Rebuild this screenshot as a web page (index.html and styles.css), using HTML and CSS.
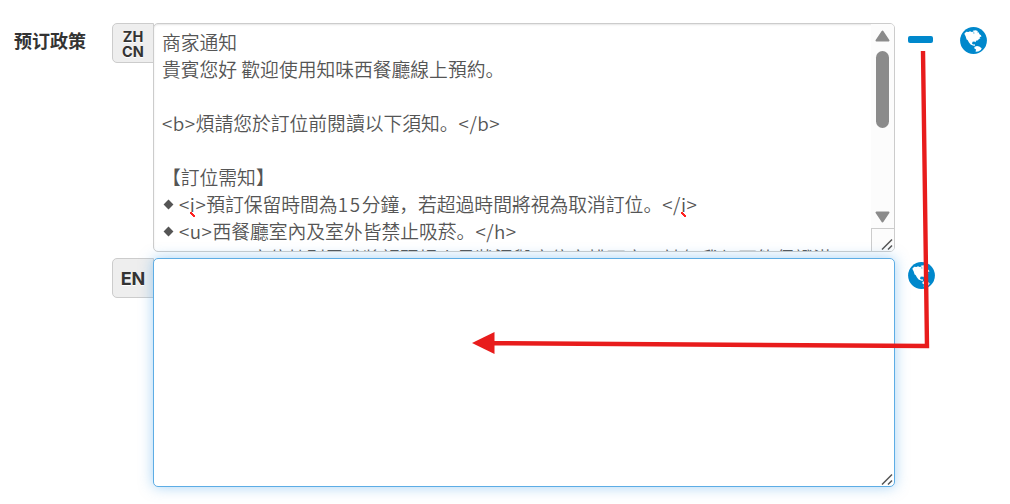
FILE: index.html
```
<!DOCTYPE html>
<html lang="zh">
<head>
	<meta charset="utf-8">
	<title>预订政策</title>
	<link rel="stylesheet" href="styles.css">
</head>
<body>
	<svg width="0" height="0" class="symbols">
		<symbol id="globe" viewBox="0 0 27 27">
			<circle cx="13.5" cy="13.5" r="13.4" fill="#0088cc"/>
			<path fill="#fff" d="M4.3 6.8L6.2 4.8 8.4 5 10 4.3 11.8 5 13.7 4.6 12.7 3.7 15.6 3.3 17.8 4.1 17.4 5.4 18.6 5.3 19.5 7.3 21 8.2 21.4 9.7 19.5 10.1 20.4 11.3 18.9 12 18 13.2 16 13.7 15.6 15.2 14.2 14.4 12.6 14.8 12 16.5 13 17.5 14.8 17.2 14.8 19 13 18.6 10.6 17.4 9 15.4 7.6 13 6.6 12.4 5.6 9.2z"/>
			<path fill="#fff" d="M14.6 19.8L17 18.9 19.3 19.6 21.7 21.3 20.9 23 18.3 24.4 15.6 24.8 16 22.6 14.2 21.2z"/>
			<path fill="#0088cc" d="M12.8 5.5l1.8.2-.6 1.1z"/>
		</symbol>
		<symbol id="grip" viewBox="0 0 12 12">
			<path d="M1 11.5L11 1.5M7 11.5L11 7.5" fill="none" stroke="#555" stroke-width="1.5"/>
		</symbol>
	</svg>

	<div class="control-group">
		<div class="control-label">预订政策</div>
		<div class="controls">
			<div class="lang-row">
				<div class="add-on">ZH<br>CN</div>
				<div class="textarea">
					<div class="text">商家通知
貴賓您好 歡迎使用知味西餐廳線上預約。

<span class="tag">&lt;b&gt;</span>煩請您於訂位前閱讀以下須知。<span class="tag">&lt;/b&gt;</span>

【訂位需知】
<span class="bullet"></span><span class="tag">&lt;<span class="typo">i</span>&gt;</span>預訂保留時間為<span class="num">15</span>分鐘，若超過時間將視為取消訂位。<span class="tag">&lt;/<span class="typo">i</span>&gt;</span>
<span class="bullet"></span><span class="tag">&lt;u&gt;</span>西餐廳室內及室外皆禁止吸菸。<span class="tag">&lt;/h&gt;</span>
<span class="indent"></span>座位特別需求將視現場人員狀況與座位安排而定，請恕我們不能保證滿</div>
					<div class="scrollbar">
						<svg class="arrow" viewBox="0 0 14 12"><path d="M7 1.5L13 10.5H1z"/></svg>
						<div class="thumb"></div>
						<svg class="arrow down" viewBox="0 0 14 12"><path d="M1 1.5H13L7 10.5z"/></svg>
						<div class="corner"><svg class="grip"><use href="#grip"/></svg></div>
					</div>
				</div>
				<div class="minus"></div>
				<svg class="globe"><use href="#globe"/></svg>
			</div>
			<div class="lang-row">
				<div class="add-on">EN</div>
				<div class="textarea focused"><svg class="grip"><use href="#grip"/></svg></div>
				<svg class="globe"><use href="#globe"/></svg>
			</div>
		</div>
	</div>

	<svg class="pointer" viewBox="0 0 1010 504">
		<path d="M923 51L927 346L492 343.2" fill="none" stroke="#e81c1c" stroke-width="4.4"/>
		<path d="M472 343L494.5 332V354z" fill="#e81c1c"/>
	</svg>
</body>
</html>
```

FILE: styles.css
```
body {
	margin: 0;
	min-height: 504px;
	background: #fff;
	font-family: "Liberation Sans", "Noto Sans CJK SC", sans-serif;
	color: #333;
	overflow: hidden;
}

.symbols {
	position: absolute;
}

.control-group {
	display: flex;
	padding-top: 23px;
}

.control-label {
	width: 98px;
	padding: 4px 0 0 14px;
	font-family: "Noto Sans CJK SC", sans-serif;
	font-size: 18px;
	font-weight: bold;
	line-height: 26px;
}

.controls {
	display: flex;
	flex-direction: column;
	gap: 6px;
}

.lang-row {
	display: flex;
	align-items: flex-start;
}

.add-on {
	box-sizing: border-box;
	width: 42px;
	height: 40px;
	margin-right: -1px;
	padding-top: 1px;
	display: flex;
	align-items: center;
	justify-content: center;
	border: 1px solid #ccc;
	border-radius: 5px 0 0 5px;
	background: #eee;
	font-family: Inter, sans-serif;
	font-size: 14.5px;
	font-weight: bold;
	line-height: 15px;
	text-align: center;
	text-shadow: 0 1px 0 #fff;
}

.lang-row:last-child .add-on {
	font-size: 18px;
}

.textarea {
	box-sizing: border-box;
	width: 742px;
	height: 229px;
	display: flex;
	overflow: hidden;
	border: 1px solid #ccc;
	border-radius: 5px;
	background: #fff;
	box-shadow: inset 0 1px 2px rgba(0, 0, 0, .1);
}

.focused {
	z-index: 1;
	align-items: flex-end;
	justify-content: flex-end;
	padding: 1px;
	border-color: #5dade5;
	box-shadow: 0 0 14px rgba(82, 168, 236, .5);
}

.text {
	flex: 1;
	padding: 4px 0 0 8px;
	color: #555;
	font-family: "Noto Sans CJK TC DemiLight", "Noto Sans CJK TC", sans-serif;
	font-size: 18.8px;
	font-weight: 350;
	line-height: 27px;
	white-space: pre;
}

.bullet {
	display: inline-block;
	width: 7px;
	height: 7px;
	margin: 0 7px 4px 3px;
	background: #555;
	transform: rotate(45deg);
}

.indent {
	display: inline-block;
	width: 88px;
}

.tag {
	letter-spacing: .5px;
}

.num {
	letter-spacing: 1.7px;
}

.typo {
	background: linear-gradient(45deg, transparent 38%, #f22 38%, #f22 62%, transparent 62%) 0 100% / 5px 5px no-repeat;
}

.scrollbar {
	width: 23px;
	display: flex;
	flex-direction: column;
	align-items: center;
	background: #fcfcfc;
}

.arrow {
	width: 15px;
	height: 12px;
	margin: 6px 0 9px;
	fill: #8b8b8b;
	stroke: #8b8b8b;
	stroke-width: 2;
	stroke-linejoin: round;
}

.down {
	margin: auto 0 5px;
}

.thumb {
	width: 13px;
	height: 77px;
	border-radius: 7px;
	background: #8b8b8b;
}

.corner {
	box-sizing: border-box;
	width: 100%;
	height: 23px;
	display: flex;
	align-items: flex-end;
	justify-content: flex-end;
	padding: 1px;
	border: solid #ccc;
	border-width: 1px 0 0 1px;
}

.grip {
	width: 12px;
	height: 12px;
}

.minus {
	width: 25px;
	height: 7px;
	margin: 13px 0 0 13px;
	border-radius: 2px;
	background: #0088cc;
}

.globe {
	width: 27px;
	height: 27px;
	margin: 4px 0 0 13px;
}

.minus + .globe {
	margin-left: 27px;
}

/* callout drawn over the form */
.pointer {
	position: absolute;
	top: 0;
	left: 0;
	width: 1010px;
	height: 504px;
	z-index: 2;
}
```
